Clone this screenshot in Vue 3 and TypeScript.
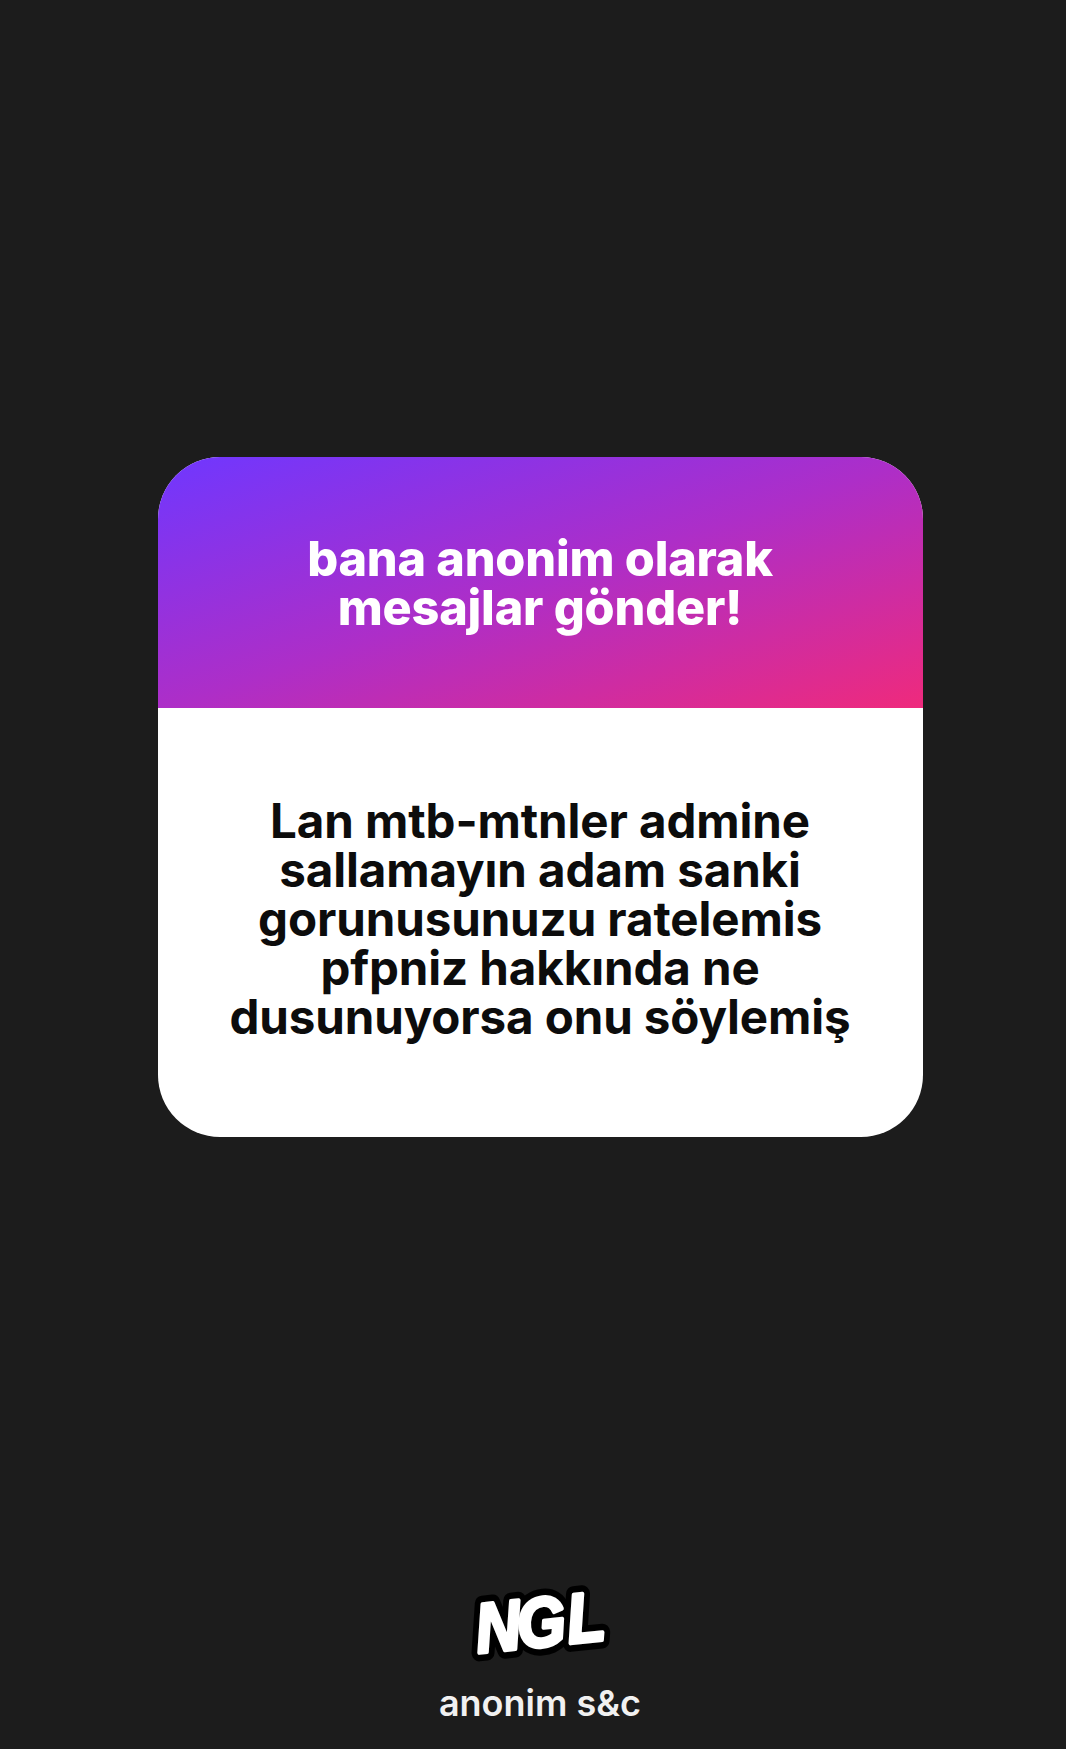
<script setup lang="ts">
const title: string[] = ['bana anonim olarak', 'mesajlar gönder!']
const message: string[] = [
  'Lan mtb-mtnler admine',
  'sallamayın adam sanki',
  'gorunusunuzu ratelemis',
  'pfpniz hakkında ne',
  'dusunuyorsa onu söylemiş',
]
</script>

<template>
  <main class="page">
    <section class="card">
      <header class="card-head">
        <div v-for="line in title" :key="line">{{ line }}</div>
      </header>
      <div class="card-body">
        <div v-for="line in message" :key="line">{{ line }}</div>
      </div>
    </section>

    <footer class="brand">
      <svg class="logo" width="150" height="84" viewBox="0 0 150 84">
        <defs>
          <text id="ngl-word" class="word" x="0 47 103" y="0" transform="translate(13 71) rotate(-6) scale(0.89 1)">NGL</text>
        </defs>
        <use href="#ngl-word" class="outline" />
        <use href="#ngl-word" class="fill" />
      </svg>
      <div class="tagline">anonim s&amp;c</div>
    </footer>
  </main>
</template>

<style>
html,
body {
  margin: 0;
  background: #1c1c1c;
}
</style>

<style scoped>
.page {
  height: 1749px;
  box-sizing: border-box;
  padding-top: 457px;
  background: #1c1c1c;
  display: flex;
  flex-direction: column;
  align-items: center;
  font-family: Inter, "Liberation Sans", sans-serif;
  overflow: hidden;
}

.card {
  width: 765px;
  margin-left: 14px;
  height: 680px;
  border-radius: 62px;
  overflow: hidden;
  display: flex;
  flex-direction: column;
  background: #fff;
}

.card-head {
  height: 251px;
  flex: none;
  display: flex;
  flex-direction: column;
  align-items: center;
  justify-content: center;
  background: linear-gradient(to bottom right, #6f37ff 0%, #ad2ec8 50%, #ef2a7c 100%);
  color: #fff;
  font-size: 48.6px;
  line-height: 49px;
  font-weight: 800;
  letter-spacing: -0.2px;
}

.card-body {
  flex: 1;
  display: flex;
  flex-direction: column;
  align-items: center;
  justify-content: center;
  padding-bottom: 9px;
  color: #0c0c0c;
  font-size: 47.5px;
  line-height: 49px;
  font-weight: 700;
  letter-spacing: -0.1px;
}

.brand {
  margin-top: 445px;
  margin-left: 14px;
  display: flex;
  flex-direction: column;
  align-items: center;
}

.logo {
  display: block;
}

.word {
  font-family: "Liberation Sans", sans-serif;
  font-size: 70px;
  font-weight: 700;
  font-style: italic;
}

.outline {
  fill: #000;
  stroke: #000;
  stroke-width: 17px;
  stroke-linejoin: round;
}

.fill {
  fill: #fff;
  stroke: #fff;
  stroke-width: 4px;
  stroke-linejoin: round;
}

.tagline {
  margin-top: 17px;
  color: #f1f1f1;
  font-size: 36px;
  line-height: 40px;
  font-weight: 600;
}
</style>
